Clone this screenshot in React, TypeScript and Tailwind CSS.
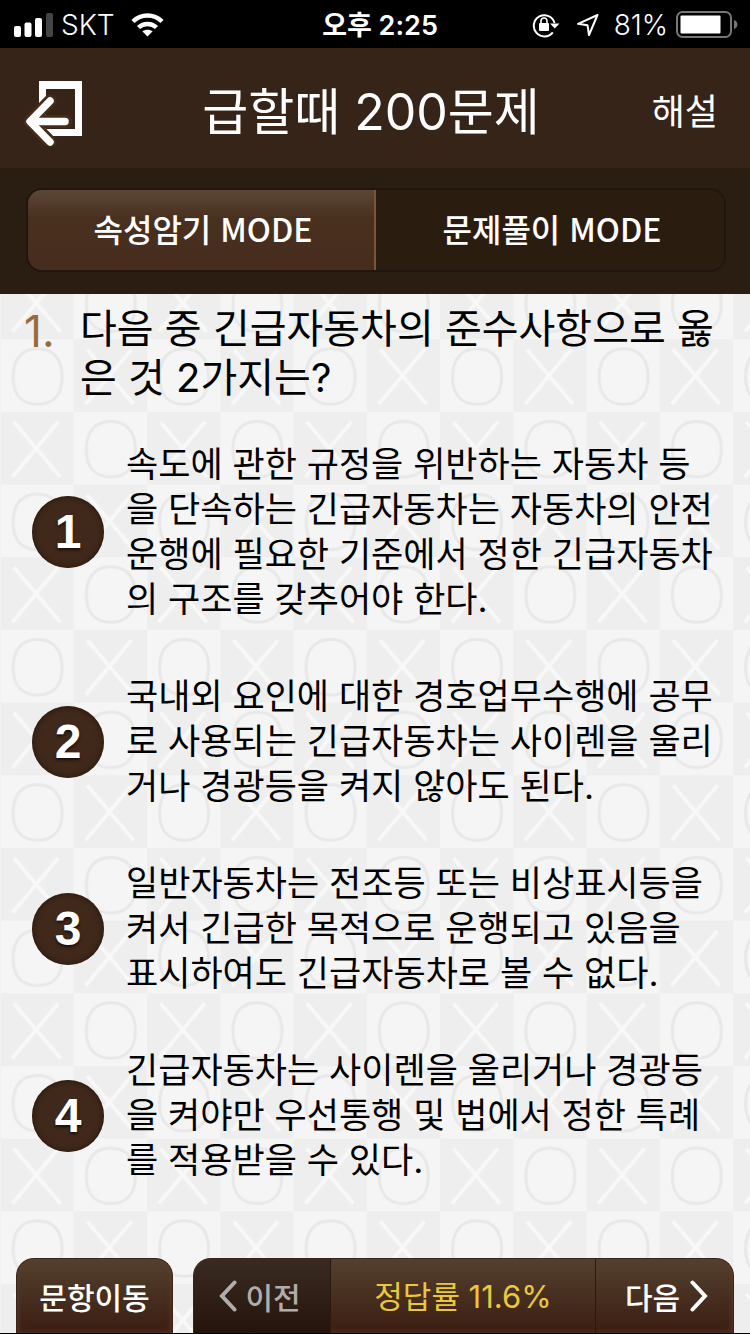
import React, { useState } from "react"
import clsx from "clsx"

const question = {
  number: 1,
  text: "다음 중 긴급자동차의 준수사항으로 옳은 것 2가지는?",
  choices: [
    "속도에 관한 규정을 위반하는 자동차 등을 단속하는 긴급자동차는 자동차의 안전운행에 필요한 기준에서 정한 긴급자동차의 구조를 갖추어야 한다.",
    "국내외 요인에 대한 경호업무수행에 공무로 사용되는 긴급자동차는 사이렌을 울리거나 경광등을 켜지 않아도 된다.",
    "일반자동차는 전조등 또는 비상표시등을 켜서 긴급한 목적으로 운행되고 있음을 표시하여도 긴급자동차로 볼 수 없다.",
    "긴급자동차는 사이렌을 울리거나 경광등을 켜야만 우선통행 및 법에서 정한 특례를 적용받을 수 있다.",
  ],
}

const StatusBar = () => {
  return (
    <div className="grid h-12 grid-cols-[1fr_auto_1fr] items-center bg-black pt-0.5 pr-3 pl-3.5 text-[28px] leading-none text-white">
      <div className="flex items-center">
        <svg width="39" height="24" viewBox="0 0 39 24" className="mr-2">
          <rect x="0" y="13" width="7" height="11" rx="2" fill="#fff" />
          <rect x="10.5" y="9.500" width="7" height="14.500" rx="2" fill="#fff" />
          <rect x="21" y="5" width="7" height="19" rx="2" fill="#fff" />
          <rect x="32" y="0" width="7" height="24" rx="2" fill="#444" />
        </svg>
        <span className="font-light">SKT</span>
        <svg width="33" height="24" viewBox="0 0 33 24" className="ml-4">
          <path d="M2 8.500C10 .5 23 .5 31 8.500" fill="none" stroke="#fff" strokeWidth="4.500" />
          <path d="M7.500 14.500C12.500 9.700 20.500 9.700 25.500 14.500" fill="none" stroke="#fff" strokeWidth="4.500" />
          <path d="M16.500 23.500L11.300 18.300C14 16.200 19 16.200 21.700 18.300Z" fill="#fff" />
        </svg>
      </div>
      <span className="pl-2 text-[27px] font-semibold">오후 2:25</span>
      <div className="flex items-center justify-end">
        <svg width="28" height="26" viewBox="0 0 28 26" className="mr-4">
          <path d="M20.800 20.300A10.600 10.600 0 1 1 22.600 11" fill="none" stroke="#fff" strokeWidth="2" />
          <path d="M18 11.500H27.500L22.800 16.500Z" fill="#fff" />
          <rect x="7" y="11" width="10" height="8" rx="1" fill="#fff" />
          <path d="M9 11.500V9a3 3 0 0 1 6 0v2.500" fill="none" stroke="#fff" strokeWidth="1.600" />
        </svg>
        <svg width="24" height="24" viewBox="0 0 24 24" className="mr-3.5">
          <path d="M21.500 2L2 10.800L11.500 12.200L13 22Z" fill="none" stroke="#fff" strokeWidth="2" strokeLinejoin="round" />
        </svg>
        <span className="mr-2 font-light">81%</span>
        <svg width="62" height="28" viewBox="0 0 62 28">
          <rect x="1" y="1" width="54" height="25" rx="5.500" fill="none" stroke="#777" strokeWidth="2" />
          <rect x="4.500" y="4.500" width="40" height="18" rx="1" fill="#fff" />
          <path d="M58 9c4.500 1.500 4.500 7.500 0 9z" fill="#777" />
        </svg>
      </div>
    </div>
  )
}

const Header = () => {
  return (
    <header className="grid h-30 grid-cols-[1fr_auto_1fr] items-center bg-[#362418] pr-8 pl-6 text-white">
      <button type="button" aria-label="나가기" className="w-fit">
        <svg width="62" height="76" viewBox="0 0 62 76">
          <path d="M15 11H58V66H15ZM22 19V59H51V19Z" fill="#fff" fillRule="evenodd" />
          <path d="M26 31L6 51.500L26 72M8 51.500H42" fill="none" stroke="#452c1b" strokeWidth="13" strokeLinecap="round" strokeLinejoin="round" />
          <path d="M26 31L6 51.500L26 72M8 51.500H41" fill="none" stroke="#fff" strokeWidth="7.500" strokeLinecap="round" strokeLinejoin="round" />
        </svg>
      </button>
      <h1 className="pt-2 text-[50px] leading-none font-normal">급할때 200문제</h1>
      <button type="button" className="justify-self-end pt-2 text-4xl leading-none font-normal">
        해설
      </button>
    </header>
  )
}

const modes = ["속성암기 MODE", "문제풀이 MODE"]

const ModeTabs = () => {
  const [active, setActive] = useState(0)

  return (
    <nav className="bg-[#2a1d12] pt-5 pr-6 pb-5.5 pl-6.5">
      <div className="grid h-21 grid-cols-2 overflow-hidden rounded-2xl border-2 border-[#21160d]">
        {modes.map((mode, i) => (
          <button
            key={mode}
            type="button"
            onClick={() => setActive(i)}
            className={clsx(
              "pb-1 pl-1 font-['Noto_Sans_CJK_KR',sans-serif] text-[32px] leading-none font-medium text-white",
              i === active
                ? "border-r-2 border-[#7a5636] bg-linear-to-b from-[#5c4736] via-[#48301f] via-35% to-[#472c1d]"
                : "bg-[#2b1c10]"
            )}
          >
            {mode}
          </button>
        ))}
      </div>
    </nav>
  )
}

// checkerboard of O and X tiles behind the question
const OXPattern = () => {
  return (
    <svg className="absolute inset-0 h-full w-full" aria-hidden="true">
      <defs>
        <pattern id="ox" x="0.6" y="45.3" width="146.5" height="145.33" patternUnits="userSpaceOnUse">
          <rect width="146.5" height="145.33" fill="#f5f5f5" />
          <rect x="73.25" width="73.25" height="72.67" fill="#eee" />
          <rect y="72.67" width="73.25" height="72.67" fill="#eee" />
          <g fill="none" stroke="#e8e8e8" strokeWidth="3">
            <path id="o" d="M37 9.500C53 9.500 61.500 20 61.500 37.500S53 65 37 65S12.500 55 12.500 37.500S21 9.500 37 9.500Z" />
            <use href="#o" x="73.25" y="72.67" />
          </g>
          <g stroke="#f8f8f8" strokeWidth="4">
            <path id="x" d="M86.500 10L133 65M131 10L85 65" />
            <use href="#x" x="-73.25" y="72.67" />
          </g>
        </pattern>
      </defs>
      <rect width="100%" height="100%" fill="url(#ox)" />
    </svg>
  )
}

const Question = () => {
  return (
    <main className="pt-2.5 pb-6 text-black">
      <div className="flex pr-8 pl-6">
        <span className="w-14 shrink-0 text-[44px] leading-[54px] font-normal text-[#966b3d]">
          {question.number}.
        </span>
        <h2 className="text-[40px] leading-[49px] font-normal break-all">{question.text}</h2>
      </div>
      <ol className="mt-10 flex flex-col gap-13">
        {question.choices.map((choice, i) => (
          <li key={choice}>
            <button type="button" className="flex w-full items-center gap-5.5 pr-7 pl-8 text-left">
              <span className="flex size-18 shrink-0 items-center justify-center rounded-full bg-[#40291b] font-['Liberation_Sans',sans-serif] text-5xl leading-none font-bold text-white shadow-[inset_0_0_6px_#24140a] text-shadow-[0_2px_3px_#1a0e06]">
                {i + 1}
              </span>
              <span className="text-[35px] leading-[45px] break-all">{choice}</span>
            </button>
          </li>
        ))}
      </ol>
    </main>
  )
}

const BottomBar = () => {
  return (
    <footer className="mt-auto flex h-19 gap-5 border-b border-black px-4 font-['Noto_Sans_CJK_KR',sans-serif] text-[30px] leading-none font-medium text-white">
      <button
        type="button"
        className="w-[157px] rounded-t-[18px] border border-b-0 border-[#3a2417] bg-linear-to-b from-[#54402f] to-[#3a1e12] shadow-[inset_0_0_6px_#5f3d2b]"
      >
        문항이동
      </button>
      <div className="flex flex-1 overflow-hidden rounded-t-[18px] border border-b-0 border-[#3a2417] bg-linear-to-b from-[#54402f] to-[#3a1e12] shadow-[inset_0_0_6px_#5f3d2b]">
        <button
          type="button"
          className="flex w-[137px] items-center justify-center gap-2 border-r border-[#2b190f] bg-linear-to-b from-[#3a2b22] to-[#25140b] pr-1 text-[#b0aeac]"
        >
          <svg width="18" height="32" viewBox="0 0 18 32">
            <path d="M15.500 2.500L3 16L15.500 29.500" fill="none" stroke="currentColor" strokeWidth="4" strokeLinecap="round" />
          </svg>
          이전
        </button>
        <p className="flex flex-1 items-center justify-center font-[Inter,'Noto_Sans_CJK_KR',sans-serif] text-[31px] font-normal text-[#eac83c]">
          정답률 11.6%
        </p>
        <button
          type="button"
          className="flex w-[138px] items-center justify-center gap-2.5 border-l border-[#2b190f] pl-1"
        >
          다음
          <svg width="18" height="32" viewBox="0 0 18 32">
            <path d="M2.500 2.500L15 16L2.500 29.500" fill="none" stroke="currentColor" strokeWidth="4" strokeLinecap="round" />
          </svg>
        </button>
      </div>
    </footer>
  )
}

export default function App() {
  return (
    <div lang="ko" className="flex min-h-screen flex-col font-[Inter,'Noto_Sans_CJK_KR',sans-serif]">
      <StatusBar />
      <Header />
      <ModeTabs />
      <div className="relative flex flex-1 flex-col">
        <OXPattern />
        <div className="relative flex flex-1 flex-col">
          <Question />
          <BottomBar />
        </div>
      </div>
    </div>
  )
}
